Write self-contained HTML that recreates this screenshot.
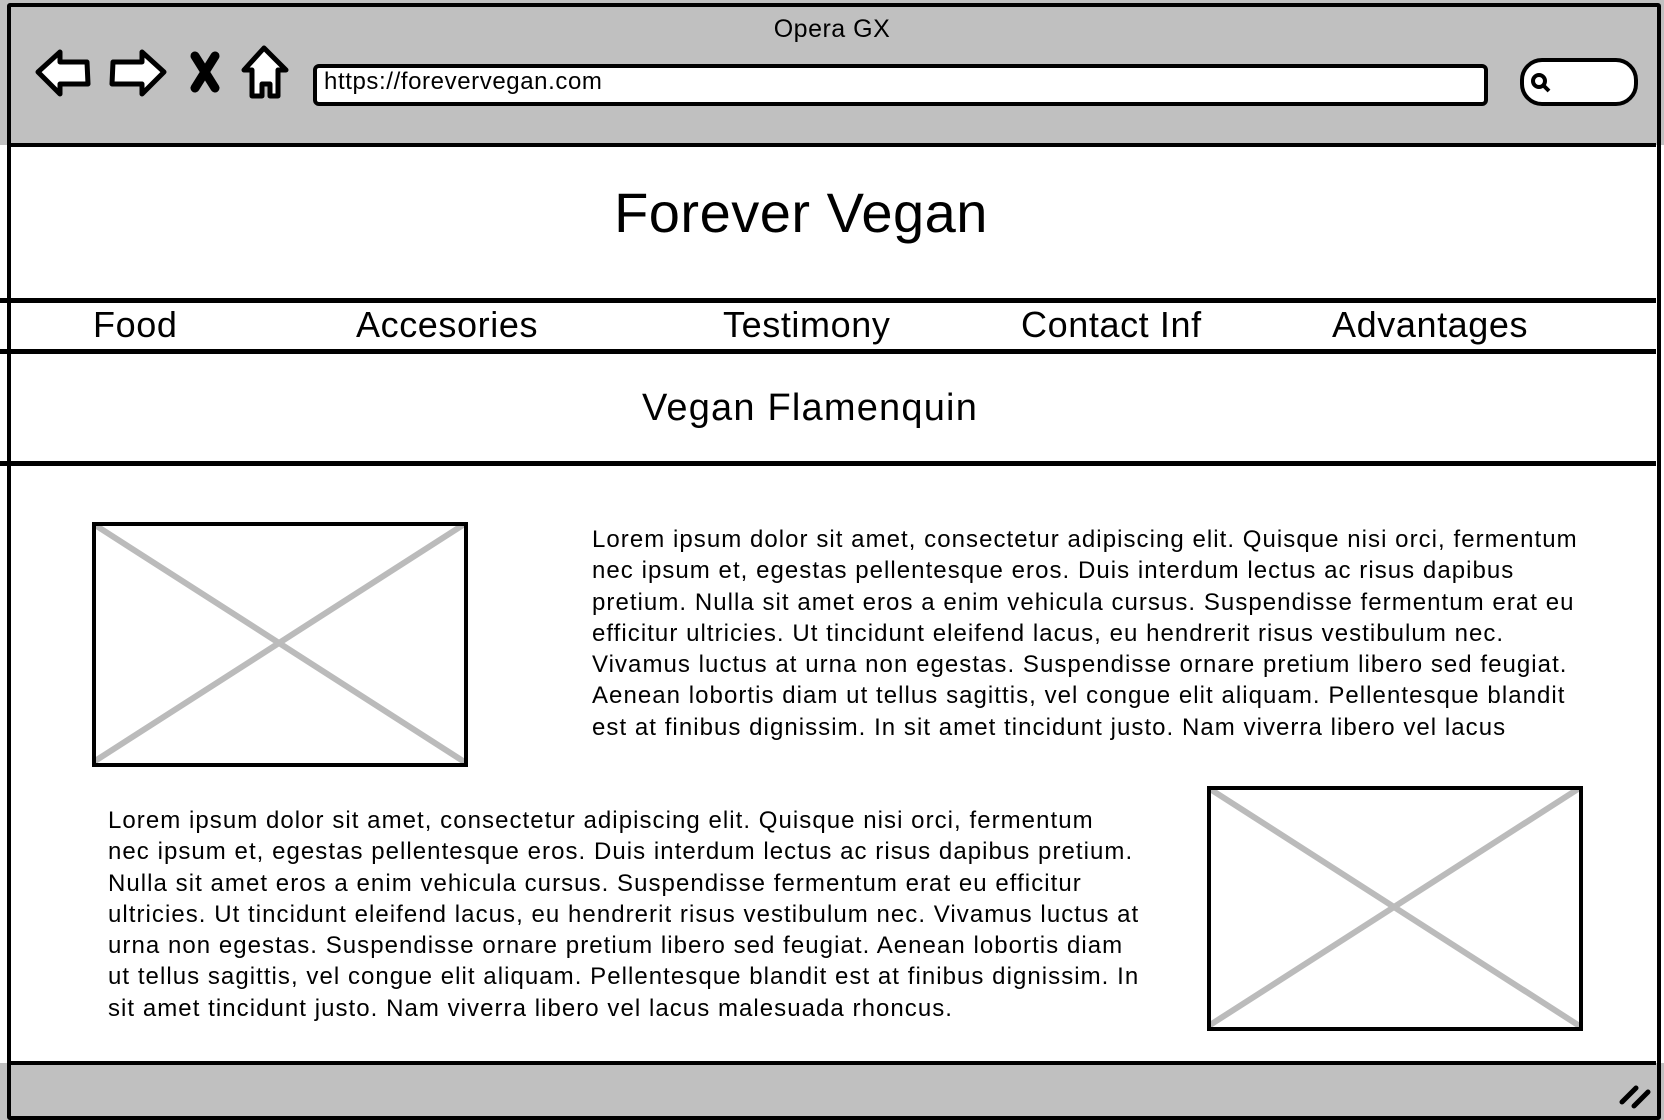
<!DOCTYPE html>
<html><head><style>
body{margin:0;width:1664px;height:1120px;background:#fff;position:relative;overflow:hidden;font-family:"Liberation Sans",sans-serif;color:#000}
.a{position:absolute}
.p{position:absolute;font-size:24px;line-height:31.3px;white-space:nowrap;letter-spacing:1.05px}
.nav{position:absolute;top:304px;font-size:36px;letter-spacing:0.6px}
</style></head><body>
<div class="a" style="left:0;top:0;width:1664px;height:145px;background:#c0c0c0"></div>
<div class="a" style="left:0;top:1063px;width:1664px;height:57px;background:#c0c0c0"></div>
<div class="a" style="left:7px;top:3px;width:1646px;height:1109px;border:4px solid #000;border-radius:3px"></div>
<div class="a" style="left:8px;top:143px;width:1648px;height:4px;background:#000"></div>
<div class="a" style="left:8px;top:1061px;width:1648px;height:4px;background:#000"></div>
<div class="a" style="left:0;top:15px;width:1664px;text-align:center;font-size:25px;letter-spacing:0.5px">Opera GX</div>
<svg class="a" style="left:30px;top:40px" width="270" height="70" viewBox="0 0 270 70">
<g stroke="#000" stroke-width="5" fill="#fff" stroke-linejoin="round">
<path d="M8 32 L30 12 L30 22 L57 22 L58 44 L30 44 L30 54 Z"/>
<path d="M134 32 L112 12 L112 22 L83 22 L82 44 L112 44 L112 54 Z"/>
<path d="M234 8 L214 30 L222 30 L222 56 L232 56 L232 44 L240 44 L240 56 L248 56 L248 30 L256 30 Z"/>
</g>
<path d="M165 16 L185 48 M185 16 L165 48" stroke="#000" stroke-width="9" stroke-linecap="round"/>
</svg>
<div class="a" style="left:313px;top:64px;width:1167px;height:34px;border:4px solid #000;border-radius:6px;background:#fff"></div>
<div class="a" style="left:324px;top:68px;font-size:24px;letter-spacing:0.6px">https://forevervegan.com</div>
<div class="a" style="left:1520px;top:58px;width:110px;height:40px;border:4px solid #000;border-radius:22px;background:#fff"></div>
<svg class="a" style="left:1530px;top:72px" width="24" height="24"><circle cx="9" cy="9" r="6" fill="none" stroke="#000" stroke-width="4"/><path d="M13 13 L19 19" stroke="#000" stroke-width="4"/></svg>
<div class="a" style="left:0;top:180px;width:1602px;text-align:center;font-size:56px;letter-spacing:0.5px">Forever Vegan</div>
<div class="a" style="left:0;top:298px;width:1656px;height:5px;background:#000"></div>
<div class="a" style="left:0;top:349px;width:1656px;height:5px;background:#000"></div>
<div class="a" style="left:0;top:461px;width:1656px;height:5px;background:#000"></div>
<div class="nav" style="left:93px">Food</div>
<div class="nav" style="left:356px">Accesories</div>
<div class="nav" style="left:723px">Testimony</div>
<div class="nav" style="left:1021px">Contact Inf</div>
<div class="nav" style="left:1332px">Advantages</div>
<div class="a" style="left:0;top:387px;width:1620px;text-align:center;font-size:38px;letter-spacing:1.2px">Vegan Flamenquin</div>
<svg class="a" style="left:91px;top:521px" width="380" height="250"><path d="M4 4 L372 240 M372 4 L4 240" stroke="#bbb" stroke-width="6" stroke-linecap="round"/><rect x="3" y="3" width="372" height="241" fill="none" stroke="#000" stroke-width="4"/></svg>
<svg class="a" style="left:1206px;top:785px" width="380" height="250"><path d="M4 4 L372 240 M372 4 L4 240" stroke="#bbb" stroke-width="6" stroke-linecap="round"/><rect x="3" y="3" width="372" height="241" fill="none" stroke="#000" stroke-width="4"/></svg>
<div class="p" style="left:592px;top:524px">Lorem ipsum dolor sit amet, consectetur adipiscing elit. Quisque nisi orci, fermentum<br>nec ipsum et, egestas pellentesque eros. Duis interdum lectus ac risus dapibus<br>pretium. Nulla sit amet eros a enim vehicula cursus. Suspendisse fermentum erat eu<br>efficitur ultricies. Ut tincidunt eleifend lacus, eu hendrerit risus vestibulum nec.<br>Vivamus luctus at urna non egestas. Suspendisse ornare pretium libero sed feugiat.<br>Aenean lobortis diam ut tellus sagittis, vel congue elit aliquam. Pellentesque blandit<br>est at finibus dignissim. In sit amet tincidunt justo. Nam viverra libero vel lacus</div>
<div class="p" style="left:108px;top:805px">Lorem ipsum dolor sit amet, consectetur adipiscing elit. Quisque nisi orci, fermentum<br>nec ipsum et, egestas pellentesque eros. Duis interdum lectus ac risus dapibus pretium.<br>Nulla sit amet eros a enim vehicula cursus. Suspendisse fermentum erat eu efficitur<br>ultricies. Ut tincidunt eleifend lacus, eu hendrerit risus vestibulum nec. Vivamus luctus at<br>urna non egestas. Suspendisse ornare pretium libero sed feugiat. Aenean lobortis diam<br>ut tellus sagittis, vel congue elit aliquam. Pellentesque blandit est at finibus dignissim. In<br>sit amet tincidunt justo. Nam viverra libero vel lacus malesuada rhoncus.</div>
<svg class="a" style="left:1618px;top:1080px" width="36" height="30"><path d="M4 22 L18 8 M16 26 L30 12" stroke="#000" stroke-width="5" stroke-linecap="round"/></svg>
</body></html>
